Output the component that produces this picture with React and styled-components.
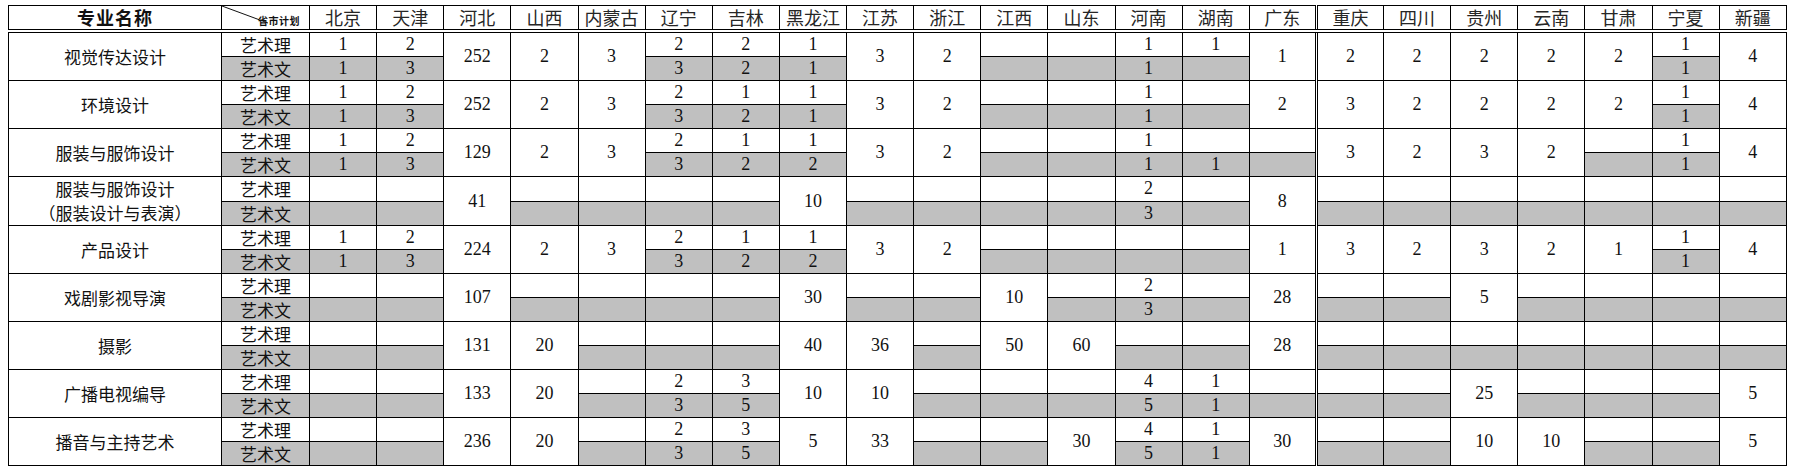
import React from "react";
import styled, { createGlobalStyle, css } from "styled-components";

const provinces = [
  "北京", "天津", "河北", "山西", "内蒙古", "辽宁", "吉林", "黑龙江", "江苏", "浙江", "江西",
  "山东", "河南", "湖南", "广东", "重庆", "四川", "贵州", "云南", "甘肃", "宁夏", "新疆",
];

// "252" = one merged cell, "2/3" = 艺术理 / 艺术文 split, "/" = split but empty
const plans = [
  {
    name: ["视觉传达设计"],
    cells: ["1/1", "2/3", "252", "2", "3", "2/3", "2/2", "1/1", "3", "2", "/", "/", "1/1", "1/", "1", "2", "2", "2", "2", "2", "1/1", "4"],
  },
  {
    name: ["环境设计"],
    cells: ["1/1", "2/3", "252", "2", "3", "2/3", "1/2", "1/1", "3", "2", "/", "/", "1/1", "/", "2", "3", "2", "2", "2", "2", "1/1", "4"],
  },
  {
    name: ["服装与服饰设计"],
    cells: ["1/1", "2/3", "129", "2", "3", "2/3", "1/2", "1/2", "3", "2", "/", "/", "1/1", "/1", "/", "3", "2", "3", "2", "/", "1/1", "4"],
  },
  {
    name: ["服装与服饰设计", "（服装设计与表演）"],
    cells: ["/", "/", "41", "/", "/", "/", "/", "10", "/", "/", "/", "/", "2/3", "/", "8", "/", "/", "/", "/", "/", "/", "/"],
  },
  {
    name: ["产品设计"],
    cells: ["1/1", "2/3", "224", "2", "3", "2/3", "1/2", "1/2", "3", "2", "/", "/", "/", "/", "1", "3", "2", "3", "2", "1", "1/1", "4"],
  },
  {
    name: ["戏剧影视导演"],
    cells: ["/", "/", "107", "/", "/", "/", "/", "30", "/", "/", "10", "/", "2/3", "/", "28", "/", "/", "5", "/", "/", "/", "/"],
  },
  {
    name: ["摄影"],
    cells: ["/", "/", "131", "20", "/", "/", "/", "40", "36", "/", "50", "60", "/", "/", "28", "/", "/", "/", "/", "/", "/", "/"],
  },
  {
    name: ["广播电视编导"],
    cells: ["/", "/", "133", "20", "/", "2/3", "3/5", "10", "10", "/", "/", "/", "4/5", "1/1", "/", "/", "/", "25", "/", "/", "/", "5"],
  },
  {
    name: ["播音与主持艺术"],
    cells: ["/", "/", "236", "20", "/", "2/3", "3/5", "5", "33", "/", "/", "30", "4/5", "1/1", "30", "/", "/", "10", "10", "/", "/", "5"],
  },
];

const GlobalStyle = createGlobalStyle`
  body {
    margin: 0;
    background: #ffffff;
    color: #111111;
    font-family: "Noto Sans CJK SC", "Noto Sans", sans-serif;
  }
`;

const Page = styled.div`
  padding: 5px 0 0 8px;
`;

const lineColor = "#000000";

const Sheet = styled.table`
  border-collapse: collapse;
  table-layout: fixed;
  width: 1779px;
  border: 1px solid ${lineColor};
`;

const cellBase = css`
  padding: 0;
  border: 1px solid ${lineColor};
  text-align: center;
  vertical-align: middle;
  white-space: nowrap;
  overflow: hidden;
  ${(p) =>
    p.$split &&
    css`
      border-left: 3px double ${lineColor};
    `}
`;

const HeadCell = styled.th`
  ${cellBase};
  height: 23px;
  border-bottom: 4px double ${lineColor};
  font-family: "Noto Sans CJK SC", sans-serif;
  font-size: 18px;
  font-weight: 400;
  color: #262626;
  line-height: 23px;
`;

const TitleCell = styled(HeadCell)`
  color: #111111;
  font-weight: 700;
  letter-spacing: 1px;
`;

const CornerCell = styled(HeadCell)`
  position: relative;
  text-align: right;
  vertical-align: top;
`;

const CornerText = styled.span`
  display: inline-block;
  padding: 4px 9px 0 0;
  font-size: 10px;
  font-weight: 700;
  letter-spacing: 0.5px;
  line-height: 12px;
  color: #111111;
`;

const Diagonal = styled.svg`
  position: absolute;
  left: 0;
  top: 0;
  width: 46px;
  height: 17px;
  overflow: visible;
`;

const Cell = styled.td`
  ${cellBase};
  height: 23px;
  line-height: 23px;
  background: ${(p) => (p.$shade ? "#c0c0c0" : "#ffffff")};
  font-family: ${(p) =>
    p.$label
      ? `"Noto Sans CJK SC", sans-serif`
      : `"Liberation Serif", "Times New Roman", serif`};
  font-size: ${(p) => (p.$label ? "17px" : "18px")};
`;

const NameCell = styled.td`
  ${cellBase};
  font-family: "Noto Sans CJK SC", sans-serif;
  font-size: 17px;
  line-height: 24px;
`;

const NameLine = styled.div`
  line-height: 24px;
`;

const App = () => {
  return (
    <Page>
      <GlobalStyle />
      <Sheet>
        <colgroup>
          <col style={{ width: 213 }} />
          <col style={{ width: 88 }} />
          {provinces.map((p) => (
            <col key={p} />
          ))}
        </colgroup>
        <thead>
          <tr>
            <TitleCell>专业名称</TitleCell>
            <CornerCell>
              <Diagonal viewBox="0 0 46 17">
                <line x1="0" y1="0" x2="46" y2="17" stroke="#111" strokeWidth="1" />
              </Diagonal>
              <CornerText>省市计划</CornerText>
            </CornerCell>
            {provinces.map((p, i) => (
              <HeadCell key={p} $split={i === 15}>
                {p}
              </HeadCell>
            ))}
          </tr>
        </thead>
        <tbody>
          {plans.map((plan) => {
            const parts = plan.cells.map((c) => (c.includes("/") ? c.split("/") : null));
            return (
              <React.Fragment key={plan.name.join("")}>
                <tr>
                  <NameCell rowSpan={2}>
                    {plan.name.map((line) => (
                      <NameLine key={line}>{line}</NameLine>
                    ))}
                  </NameCell>
                  <Cell $label>艺术理</Cell>
                  {plan.cells.map((c, i) =>
                    parts[i] ? (
                      <Cell key={i} $split={i === 15}>
                        {parts[i][0]}
                      </Cell>
                    ) : (
                      <Cell key={i} rowSpan={2} $split={i === 15}>
                        {c}
                      </Cell>
                    ),
                  )}
                </tr>
                <tr>
                  <Cell $label $shade>
                    艺术文
                  </Cell>
                  {plan.cells.map((c, i) =>
                    parts[i] ? (
                      <Cell key={i} $shade $split={i === 15}>
                        {parts[i][1]}
                      </Cell>
                    ) : null,
                  )}
                </tr>
              </React.Fragment>
            );
          })}
        </tbody>
      </Sheet>
    </Page>
  );
};

export default App;
